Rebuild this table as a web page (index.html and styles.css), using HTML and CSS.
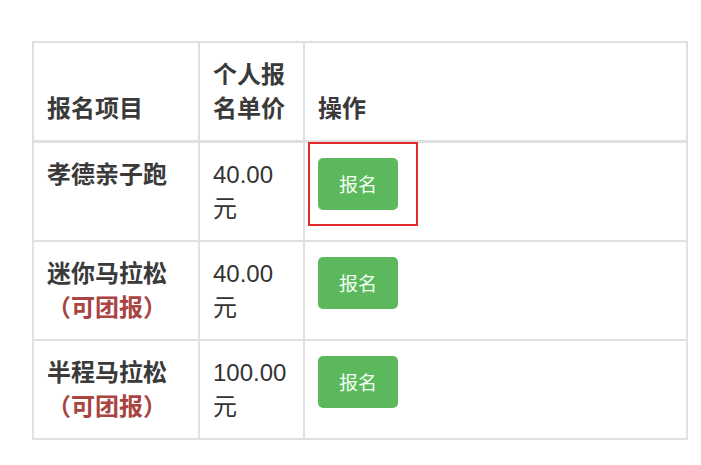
FILE: index.html
```html
<!DOCTYPE html>
<html lang="zh-CN">
<head>
<meta charset="utf-8">
<link rel="stylesheet" href="styles.css">
</head>
<body>
<table class="price-table">
  <colgroup>
    <col class="c1">
    <col class="c2">
    <col class="c3">
  </colgroup>
  <thead>
    <tr>
      <th>报名项目</th>
      <th>个人报名单价</th>
      <th>操作</th>
    </tr>
  </thead>
  <tbody>
    <tr>
      <th>孝德亲子跑</th>
      <td>40.00 元</td>
      <td class="op"><button class="btn">报名</button><span class="mark"></span></td>
    </tr>
    <tr>
      <th>迷你马拉松<span class="group">（可团报）</span></th>
      <td>40.00 元</td>
      <td class="op"><button class="btn">报名</button></td>
    </tr>
    <tr>
      <th>半程马拉松<span class="group">（可团报）</span></th>
      <td>100.00 元</td>
      <td class="op"><button class="btn">报名</button></td>
    </tr>
  </tbody>
</table>
</body>
</html>
```

FILE: styles.css
```css
html, body {
  margin: 0;
  padding: 0;
  background: #fff;
}
body {
  padding: 41px 0 0 32px;
  font-family: "Liberation Sans", "Noto Sans CJK SC", sans-serif;
  font-size: 24px;
  line-height: 34px;
  color: #333;
}
.price-table {
  border-collapse: collapse;
  table-layout: fixed;
  width: 656px;
}
.c1 { width: 166px; }
.c2 { width: 105px; }
.price-table th,
.price-table td {
  border: 2px solid #e0e0e0;
  padding: 15px 13px 14px;
  text-align: left;
  vertical-align: top;
  font-weight: normal;
}
.price-table th {
  font-weight: bold;
  color: #3a3a3a;
}
.price-table thead th {
  vertical-align: bottom;
  border-bottom-width: 3px;
}
.group {
  color: #a94442;
}
.op {
  position: relative;
}
.btn {
  display: block;
  width: 80px;
  height: 52px;
  margin: 0;
  padding: 0;
  border: none;
  border-radius: 5px;
  background: #5cb85c;
  color: #f4fff4;
  font-family: "Noto Sans CJK SC", sans-serif;
  font-size: 19px;
  line-height: 52px;
  text-align: center;
}
.mark {
  position: absolute;
  left: 3px;
  top: -1px;
  width: 106px;
  height: 80px;
  border: 2px solid #e02a2a;
}
```
